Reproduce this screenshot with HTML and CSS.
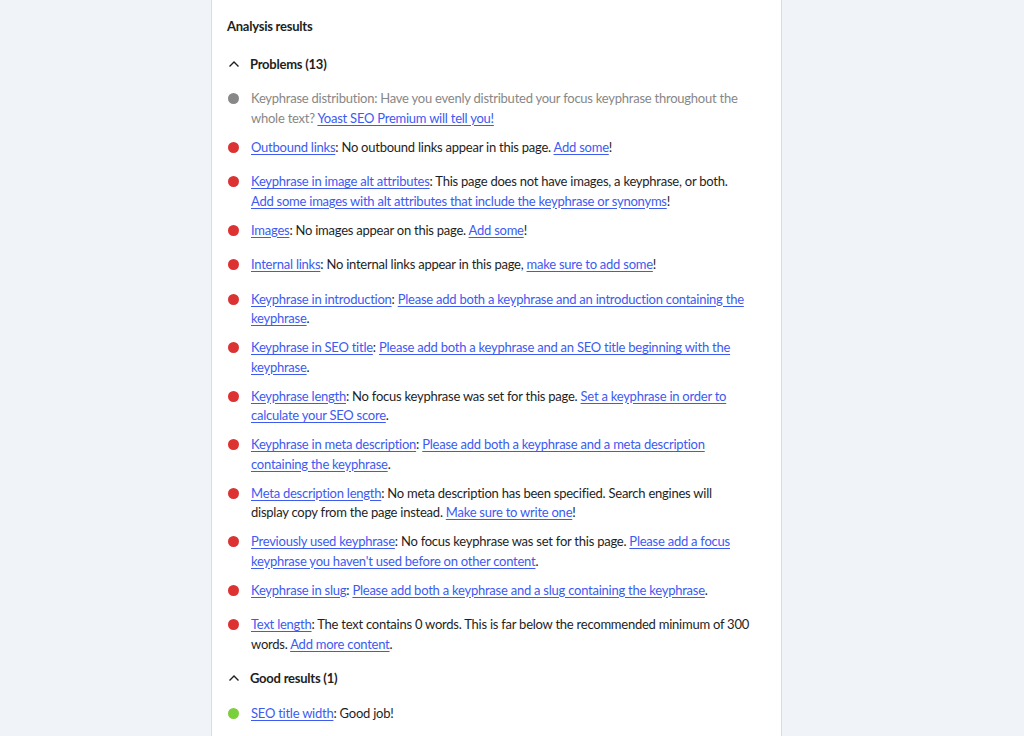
FILE: index.html
```html
<!DOCTYPE html>
<html>
<head>
<meta charset="utf-8">
<link rel="stylesheet" href="styles.css">
</head>
<body>
<div class="page">
  <div class="card">
    <h2 class="title">Analysis results</h2>

    <div class="group">
      <div class="group-head">
        <svg class="chev" viewBox="0 0 12 8" width="12" height="8"><path d="M1.5 6.5 L6 2 L10.5 6.5" fill="none" stroke="#1e1e1e" stroke-width="1.4"/></svg>
        <span>Problems (13)</span>
      </div>
      <ul class="results">
        <li class="muted"><span class="dot grey"></span><p>Keyphrase distribution: Have you evenly distributed your focus keyphrase throughout the whole text? <a href="#">Yoast SEO Premium will tell you!</a></p></li>
        <li><span class="dot red"></span><p><a href="#">Outbound links</a>: No outbound links appear in this page. <a href="#">Add some</a>!</p></li>
        <li><span class="dot red"></span><p><a href="#">Keyphrase in image alt attributes</a>: This page does not have images, a keyphrase, or both. <a href="#">Add some images with alt attributes that include the keyphrase or synonyms</a>!</p></li>
        <li><span class="dot red"></span><p><a href="#">Images</a>: No images appear on this page. <a href="#">Add some</a>!</p></li>
        <li><span class="dot red"></span><p><a href="#">Internal links</a>: No internal links appear in this page, <a href="#">make sure to add some</a>!</p></li>
        <li><span class="dot red"></span><p><a href="#">Keyphrase in introduction</a>: <a href="#">Please add both a keyphrase and an introduction containing the keyphrase</a>.</p></li>
        <li><span class="dot red"></span><p><a href="#">Keyphrase in SEO title</a>: <a href="#">Please add both a keyphrase and an SEO title beginning with the keyphrase</a>.</p></li>
        <li><span class="dot red"></span><p><a href="#">Keyphrase length</a>: No focus keyphrase was set for this page. <a href="#">Set a keyphrase in order to calculate your SEO score</a>.</p></li>
        <li><span class="dot red"></span><p><a href="#">Keyphrase in meta description</a>: <a href="#">Please add both a keyphrase and a meta description containing the keyphrase</a>.</p></li>
        <li><span class="dot red"></span><p><a href="#">Meta description length</a>: No meta description has been specified. Search engines will display copy from the page instead. <a href="#">Make sure to write one</a>!</p></li>
        <li><span class="dot red"></span><p><a href="#">Previously used keyphrase</a>: No focus keyphrase was set for this page. <a href="#">Please add a focus keyphrase you haven't used before on other content</a>.</p></li>
        <li><span class="dot red"></span><p><a href="#">Keyphrase in slug</a>: <a href="#">Please add both a keyphrase and a slug containing the keyphrase</a>.</p></li>
        <li><span class="dot red"></span><p><a href="#">Text length</a>: The text contains 0 words. This is far below the recommended minimum of 300 words. <a href="#">Add more content</a>.</p></li>
      </ul>
    </div>

    <div class="group">
      <div class="group-head">
        <svg class="chev" viewBox="0 0 12 8" width="12" height="8"><path d="M1.5 6.5 L6 2 L10.5 6.5" fill="none" stroke="#1e1e1e" stroke-width="1.4"/></svg>
        <span>Good results (1)</span>
      </div>
      <ul class="results good">
        <li><span class="dot green"></span><p><a href="#">SEO title width</a>: Good job!</p></li>
      </ul>
    </div>
  </div>
</div>
</body>
</html>
```

FILE: styles.css
```css
html, body {
  margin: 0;
  padding: 0;
  height: 100%;
}
body {
  background: #f0f3f8;
  font-family: "Lato", "Noto Sans", sans-serif;
  font-size: 13px;
  letter-spacing: -0.24px;
  color: #1e1e1e;
  overflow: hidden;
}
.page {
  padding-left: 211px;
  height: 100%;
}
.card {
  box-sizing: border-box;
  width: 571px;
  min-height: 100%;
  background: #ffffff;
  border-left: 1px solid #dcdcde;
  border-right: 1px solid #dcdcde;
  padding: 16px 16px 0 15px;
}
.title {
  margin: 0;
  font-size: 13px;
  font-weight: 700;
  line-height: 20px;
  color: #1e1e1e;
}
.group {
  margin-top: 18px;
}
.group + .group {
  margin-top: 1px;
}
.group-head {
  display: flex;
  align-items: center;
  gap: 10px;
  height: 20px;
  font-weight: 700;
  padding-left: 1px;
}
.chev {
  display: block;
}
.results {
  list-style: none;
  margin: 15px 0 14px 0;
  padding: 0;
}
.results.good {
  margin-top: 16px;
}
.results li {
  display: flex;
  align-items: flex-start;
  gap: 12px;
  min-height: 25px;
  margin-bottom: 9.5px;
}
.results p {
  margin: 0;
  line-height: 19.5px;
  max-width: 500px;
}
.dot {
  flex: none;
  width: 11px;
  height: 11px;
  border-radius: 50%;
  margin-top: 4px;
  margin-left: 1px;
}
.dot.grey { background: #888888; }
.dot.red { background: #dc3232; }
.dot.green { background: #7ad03a; }
.muted p { color: #878787; }
a {
  color: #3d5af1;
  text-decoration: underline;
  text-underline-offset: 2px;
}
```
